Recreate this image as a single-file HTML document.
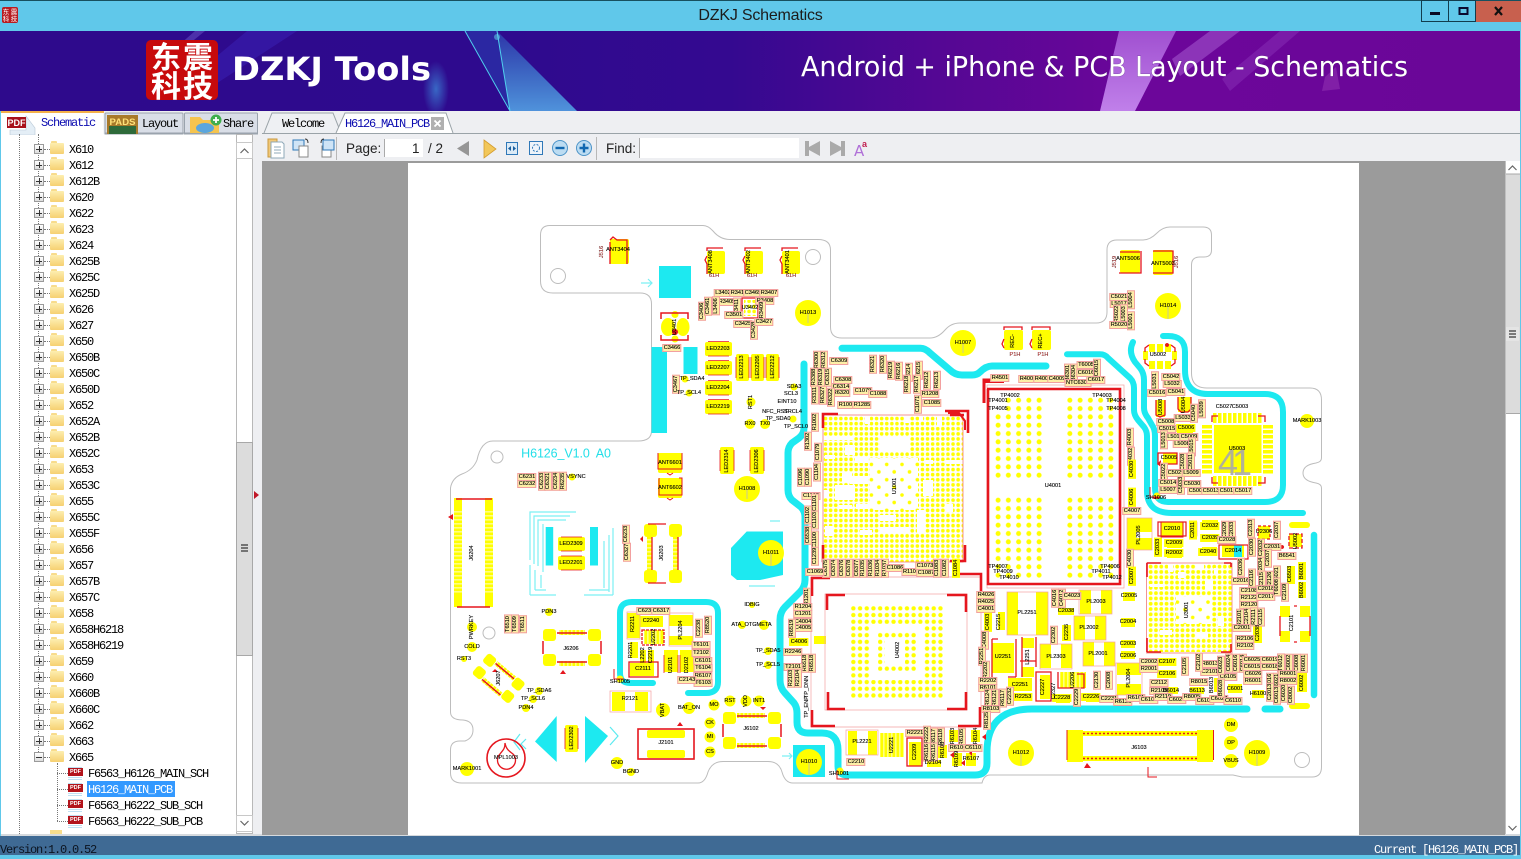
<!DOCTYPE html>
<html><head><meta charset="utf-8"><title>DZKJ Schematics</title>
<style>
html,body{margin:0;padding:0;width:1521px;height:859px;overflow:hidden;background:#60c8ea}
body{position:relative;font-family:"Liberation Sans","Noto Sans CJK SC",sans-serif}
.a{position:absolute}
.m{font-family:"Liberation Mono","Noto Sans CJK SC",monospace;font-size:12px;letter-spacing:-1.2px;white-space:pre;color:#000}
.r{position:absolute;height:16px;left:0;width:236px}
.r i{position:absolute;left:34px;top:3px;width:8px;height:8px;border:1px solid #9a9a9a;background:linear-gradient(#fff,#ddd)}
.r i:before{content:"";position:absolute;left:1px;top:4px;width:6px;height:1px;background:#333}
.r i:after{content:"";position:absolute;left:4px;top:1px;width:1px;height:6px;background:#333}
.r i.o:after{display:none}
.r s{position:absolute;left:44px;top:8px;width:6px;border-top:1px dotted #777}
.r em{position:absolute;left:50px;top:2px;width:14px;height:11px;border-radius:1px;background:linear-gradient(#fdeeb0,#f6d071)}
.r em:before{content:"";position:absolute;left:1px;top:-2px;width:6px;height:2px;background:#f8dc8c;border-radius:1px 1px 0 0}
.r span{position:absolute;left:69px;top:2px;font-family:"Liberation Mono",monospace;font-size:12px;letter-spacing:-1.2px;line-height:14px;color:#000;white-space:pre}
.f span{left:88px}
.f u{position:absolute;left:68px;top:1px;width:14px;height:15px;background:repeating-linear-gradient(#fff 0 1px,#bfe0f2 1px 2px);text-decoration:none}
.f u:before{content:"PDF";position:absolute;left:0;top:2px;width:15px;height:8px;background:#b3141c;color:#fff;font:bold 5.5px/8px "Liberation Sans";text-align:center}
.f s{left:57px;width:11px}
#pcb b{position:absolute;transform:translate(-50%,-50%);font:normal 5.6px/6px "Liberation Sans";background:#fdeea6;border:.5px solid #f2a0a0;padding:0 .5px;color:#000;white-space:nowrap;-webkit-text-stroke:.12px #000}
#pcb b.v{transform:translate(-50%,-50%) rotate(-90deg)}
#pcb b.n{background:none;border:0}
#pcb b.y{background:#ff0;border-color:#ff0}
</style></head><body>

<!-- title bar -->
<div class="a" style="left:0;top:0;width:1521px;height:1px;background:#17505f"></div>
<div class="a" style="left:0;top:0;width:1521px;text-align:center;font-size:16px;line-height:31px;color:#1c1c1c;letter-spacing:-.2px">DZKJ Schematics</div>
<svg class="a" style="left:2px;top:7px" width="16" height="16"><rect width="16" height="16" rx="2" fill="#b81c20"/><text x="4" y="7" font-size="6.5" fill="#fff" text-anchor="middle" font-family="Noto Sans CJK SC">东</text><text x="12" y="7" font-size="6.5" fill="#fff" text-anchor="middle" font-family="Noto Sans CJK SC">震</text><text x="4" y="14" font-size="6.5" fill="#fff" text-anchor="middle" font-family="Noto Sans CJK SC">科</text><text x="12" y="14" font-size="6.5" fill="#fff" text-anchor="middle" font-family="Noto Sans CJK SC">技</text></svg>
<svg class="a" style="left:1421px;top:0" width="100" height="22">
<rect x=".5" y=".5" width="27" height="21" fill="#60c8ea" stroke="#123d4d"/>
<rect x="27.5" y=".5" width="27" height="21" fill="#60c8ea" stroke="#123d4d"/>
<rect x="55" y="1" width="45" height="21" fill="#c8604e"/>
<rect x="9" y="12" width="10" height="3" fill="#0a0a22"/>
<rect x="38.5" y="8" width="8" height="6" fill="none" stroke="#0a0a30" stroke-width="2"/>
<path d="M74 7l7 8M81 7l-7 8" stroke="#111" stroke-width="2.2"/>
</svg>

<!-- banner -->
<svg class="a" style="left:0;top:31px" width="1520" height="80">
<defs>
<linearGradient id="bg" x1="0" x2="1"><stop offset="0" stop-color="#2e0a8c"/><stop offset=".33" stop-color="#2e0a8e"/><stop offset=".48" stop-color="#340990"/><stop offset=".62" stop-color="#550794"/><stop offset=".75" stop-color="#6c069a"/><stop offset="1" stop-color="#6a0698"/></linearGradient>
<linearGradient id="bl" x1="0" x2="0" y1="0" y2="1"><stop offset="0" stop-color="#4ab4e8" stop-opacity=".1"/><stop offset="1" stop-color="#5cb6ee" stop-opacity=".75"/></linearGradient>
<linearGradient id="pk" x1="0" x2="0" y1="0" y2="1"><stop offset="0" stop-color="#a050d0"/><stop offset="1" stop-color="#c080ea"/></linearGradient>
<radialGradient id="gl"><stop offset="0" stop-color="#3c86d8" stop-opacity=".75"/><stop offset="1" stop-color="#3c86d8" stop-opacity="0"/></radialGradient>
</defs>
<rect width="1520" height="80" fill="url(#bg)"/>
<path d="M297 0L247 0L175 60L205 60Z" fill="#3a20b4" opacity=".55"/>
<path d="M205 0L195 0L170 22L178 22Z" fill="#6a55c8" opacity=".5"/>
<ellipse cx="436" cy="58" rx="13" ry="28" fill="url(#gl)"/>
<path d="M465 0L497 0L577 80L510 80Z" fill="#2b2ea8" opacity=".8"/>
<path d="M497 0L577 80L510 80Z" fill="url(#bl)"/>
<path d="M465 0L510 80M497 0L510 80" stroke="#4fd0ee" stroke-width="1" fill="none"/>
<circle cx="497" cy="6" r="3" fill="#66e2f0" opacity=".5"/>
<path d="M1119 0L1176 0L1135 80L1100 80Z" fill="url(#pk)"/>
<path d="M1210 0L1240 0L1180 45L1172 28Z" fill="#9a48c4" opacity=".7"/>
<path d="M1280 0L1300 0L1230 60L1222 48Z" fill="#8a30b8" opacity=".5"/>
<path d="M1325 46L1336 36L1340 58L1322 60Z" fill="#9030b0" opacity=".6"/>
<rect x="146" y="9" width="72" height="60" rx="5" fill="#c70a0c"/>
<g fill="#fff" font-family="Noto Sans CJK SC" font-weight="700" font-size="30" text-anchor="middle"><text x="166" y="37">东</text><text x="198" y="37">震</text><text x="166" y="66">科</text><text x="198" y="66">技</text></g>
<text x="232" y="49" font-family="DejaVu Sans" font-weight="700" font-size="32" fill="#fff" textLength="199" lengthAdjust="spacingAndGlyphs">DZKJ Tools</text>
<text x="801" y="45" font-family="DejaVu Sans" font-size="28" fill="#fff" textLength="607" lengthAdjust="spacingAndGlyphs" style="paint-order:stroke" stroke="#3a1c60" stroke-opacity=".35" stroke-width="1">Android + iPhone &amp; PCB Layout - Schematics</text>
</svg>
<div class="a" style="left:1520px;top:31px;width:1px;height:828px;background:#60c8ea"></div>

<!-- tab bars -->
<div class="a" style="left:1px;top:111px;width:1519px;height:50px;background:#eeeff2"></div>
<div class="a" style="left:262px;top:133px;width:1258px;height:1px;background:#9aa3a8"></div>
<div class="a" style="left:1px;top:134px;width:261px;height:702px;background:#eeeff2"></div>
<div class="a" style="left:1px;top:134px;width:252px;height:700px;background:#fff"></div>

<svg class="a" style="left:0;top:111px" width="460" height="24">
<path d="M105 23V3q0-1 1-1h76q1 0 1 1V23Z" fill="#d9dee7" stroke="#9aa3ad"/>
<path d="M184.500 23V3q0-1 1-1h71q1 0 1 1V23Z" fill="#d9dee7" stroke="#9aa3ad"/>
<path d="M105 22H258" stroke="#9aa3ad"/>
<path d="M1 24V2H103.500V24Z" fill="#fff"/>
<rect x="1" y="0" width="103" height="2" fill="#f3b04a"/>
<path d="M26 5L35 17V24H10V19H26Z" fill="#e4eef6" stroke="#b8c8d6" stroke-width=".6"/>
<rect x="7" y="6" width="19" height="11" fill="#a8101a"/><text x="16.500" y="15" font-size="9" font-weight="700" fill="#fff" text-anchor="middle">PDF</text>
<rect x="107" y="4" width="31" height="19" fill="#a87a2a"/><rect x="109" y="15" width="27" height="8" fill="#2e6a3a"/><text x="122.500" y="14" font-size="9.500" font-weight="700" fill="#ffe27a" text-anchor="middle" textLength="26">PADS</text>
<path d="M190 22V6h10l3 3h16v13Z" fill="#f5c44e"/><ellipse cx="205" cy="17" rx="9" ry="5" fill="#5aa6de"/><circle cx="216" cy="9" r="5.500" fill="#3fae4c"/><path d="M213 9h6M216 6v6" stroke="#fff" stroke-width="1.800"/>
<path d="M264 22L272 2H333L341 22" fill="#eef0f3" stroke="#9aa3a8"/>
<path d="M336 22L345 2H446L453 22" fill="#fff" stroke="#9aa3a8"/>
<rect x="431" y="6" width="13" height="13" fill="#b0b0b0"/><path d="M434.500 9.500l6 6M440.500 9.500l-6 6" stroke="#fff" stroke-width="1.800"/>
</svg>
<div class="a m" style="left:41px;top:116px;color:#0b0bb0">Schematic</div>
<div class="a m" style="left:142px;top:117px">Layout</div>
<div class="a m" style="left:223px;top:117px">Share</div>
<div class="a m" style="left:282px;top:117px">Welcome</div>
<div class="a m" style="left:345px;top:117px;color:#0b0bb0">H6126_MAIN_PCB</div>

<!-- tree -->
<div class="a" style="left:19px;top:134px;height:700px;border-left:1px dotted #777"></div>
<div class="a" style="left:38px;top:134px;height:622px;border-left:1px dotted #777"></div>
<div class="a" style="left:57px;top:763px;height:58px;border-left:1px dotted #777"></div>
<div class="r" style="top:141px"><i></i><s></s><em></em><span>X610</span></div>
<div class="r" style="top:157px"><i></i><s></s><em></em><span>X612</span></div>
<div class="r" style="top:173px"><i></i><s></s><em></em><span>X612B</span></div>
<div class="r" style="top:189px"><i></i><s></s><em></em><span>X620</span></div>
<div class="r" style="top:205px"><i></i><s></s><em></em><span>X622</span></div>
<div class="r" style="top:221px"><i></i><s></s><em></em><span>X623</span></div>
<div class="r" style="top:237px"><i></i><s></s><em></em><span>X624</span></div>
<div class="r" style="top:253px"><i></i><s></s><em></em><span>X625B</span></div>
<div class="r" style="top:269px"><i></i><s></s><em></em><span>X625C</span></div>
<div class="r" style="top:285px"><i></i><s></s><em></em><span>X625D</span></div>
<div class="r" style="top:301px"><i></i><s></s><em></em><span>X626</span></div>
<div class="r" style="top:317px"><i></i><s></s><em></em><span>X627</span></div>
<div class="r" style="top:333px"><i></i><s></s><em></em><span>X650</span></div>
<div class="r" style="top:349px"><i></i><s></s><em></em><span>X650B</span></div>
<div class="r" style="top:365px"><i></i><s></s><em></em><span>X650C</span></div>
<div class="r" style="top:381px"><i></i><s></s><em></em><span>X650D</span></div>
<div class="r" style="top:397px"><i></i><s></s><em></em><span>X652</span></div>
<div class="r" style="top:413px"><i></i><s></s><em></em><span>X652A</span></div>
<div class="r" style="top:429px"><i></i><s></s><em></em><span>X652B</span></div>
<div class="r" style="top:445px"><i></i><s></s><em></em><span>X652C</span></div>
<div class="r" style="top:461px"><i></i><s></s><em></em><span>X653</span></div>
<div class="r" style="top:477px"><i></i><s></s><em></em><span>X653C</span></div>
<div class="r" style="top:493px"><i></i><s></s><em></em><span>X655</span></div>
<div class="r" style="top:509px"><i></i><s></s><em></em><span>X655C</span></div>
<div class="r" style="top:525px"><i></i><s></s><em></em><span>X655F</span></div>
<div class="r" style="top:541px"><i></i><s></s><em></em><span>X656</span></div>
<div class="r" style="top:557px"><i></i><s></s><em></em><span>X657</span></div>
<div class="r" style="top:573px"><i></i><s></s><em></em><span>X657B</span></div>
<div class="r" style="top:589px"><i></i><s></s><em></em><span>X657C</span></div>
<div class="r" style="top:605px"><i></i><s></s><em></em><span>X658</span></div>
<div class="r" style="top:621px"><i></i><s></s><em></em><span>X658H6218</span></div>
<div class="r" style="top:637px"><i></i><s></s><em></em><span>X658H6219</span></div>
<div class="r" style="top:653px"><i></i><s></s><em></em><span>X659</span></div>
<div class="r" style="top:669px"><i></i><s></s><em></em><span>X660</span></div>
<div class="r" style="top:685px"><i></i><s></s><em></em><span>X660B</span></div>
<div class="r" style="top:701px"><i></i><s></s><em></em><span>X660C</span></div>
<div class="r" style="top:717px"><i></i><s></s><em></em><span>X662</span></div>
<div class="r" style="top:733px"><i></i><s></s><em></em><span>X663</span></div>
<div class="r" style="top:749px"><i class="o"></i><s></s><em></em><span>X665</span></div>
<div class="r f" style="top:765px"><s></s><u></u><span>F6563_H6126_MAIN_SCH</span></div>
<div class="a" style="left:87px;top:781px;width:88px;height:16px;background:#3399ff"></div>
<div class="r f" style="top:781px"><s></s><u></u><span style="color:#fff">H6126_MAIN_PCB</span></div>
<div class="r f" style="top:797px"><s></s><u></u><span>F6563_H6222_SUB_SCH</span></div>
<div class="r f" style="top:813px"><s></s><u></u><span>F6563_H6222_SUB_PCB</span></div>
<div class="a" style="left:50px;top:830px;width:12px;height:4px;background:#f8dd8c"></div>

<!-- tree scrollbar -->
<svg class="a" style="left:236px;top:134px" width="26" height="700">
<rect x=".5" y=".5" width="16" height="699" fill="#fff" stroke="#b8b8b8"/>
<rect x=".5" y="8.500" width="16" height="16" fill="#fff" stroke="#c8c8c8"/>
<path d="M4.500 19l4-4 4 4" fill="none" stroke="#666" stroke-width="1.200"/>
<rect x=".5" y="681.500" width="16" height="16" fill="#fff" stroke="#c8c8c8"/>
<path d="M4.500 687l4 4 4-4" fill="none" stroke="#666" stroke-width="1.200"/>
<rect x=".5" y="308.500" width="16" height="213" fill="#dcdcdc" stroke="#a8a8a8"/>
<path d="M5 411h7M5 414h7M5 417h7" stroke="#666" stroke-width="1.800"/>
<path d="M18 357l5 4-5 4Z" fill="#c01828"/>
</svg>

<!-- toolbar -->
<svg class="a" style="left:262px;top:134px" width="620" height="28">
<path d="M6 5h9v18H6z" fill="#f1c878" stroke="#c99a40"/><path d="M9 8h11l2 2v14H9z" fill="#fff" stroke="#8fa8b8"/><path d="M12 13h7M12 16h7M12 19h7" stroke="#8fa8b8"/>
<path d="M31 6h11v10H31z" fill="#cfe4f6" stroke="#2f78b8"/><path d="M37 12h9v11H37z" fill="#fff" stroke="#888"/><path d="M43 5q3 0 3 4" fill="none" stroke="#333"/>
<path d="M60 12h9v11H60z" fill="#fff" stroke="#888"/><path d="M61 6h11v10H61z" fill="#cfe4f6" stroke="#2f78b8"/><path d="M59 9q0-4 3-4" fill="none" stroke="#333"/>
<path d="M74.500 3v23" stroke="#b8b8b8"/>
<rect x="122" y="5" width="39" height="18" fill="#fff"/>
<path d="M122.500 5v18" stroke="#aaa"/>
<path d="M207 7v15l-12-7.500z" fill="#969696"/>
<path d="M222 6l12 9-12 9z" fill="#f2c75a" stroke="#d49c2e" stroke-width=".8"/>
<rect x="244.500" y="8.500" width="11" height="12" fill="#dbeaf6" stroke="#2f78b8"/><path d="M246 14.500l3-2.500v5zM254 14.500l-3-2.500v5z" fill="#1b5f9e"/>
<rect x="267.500" y="7.500" width="13" height="13" fill="#eef4fa" stroke="#2f78b8"/><circle cx="274" cy="14" r="3.500" fill="none" stroke="#2f78b8" stroke-dasharray="2 1.400"/>
<circle cx="298" cy="14" r="7.500" fill="#bcdcf2" stroke="#4d94c8"/><rect x="293.500" y="12.800" width="9" height="2.400" fill="#1168b0"/>
<circle cx="322" cy="14" r="7.500" fill="#bcdcf2" stroke="#4d94c8"/><path d="M317.500 14h9M322 9.500v9" stroke="#1168b0" stroke-width="2.400"/>
<path d="M334.500 3v23" stroke="#b8b8b8"/>
<rect x="377" y="4" width="160" height="20" fill="#fff"/><path d="M377.500 4v20" stroke="#aaa"/>
<path d="M543 7h4v15h-4zM558 7v15l-11-6v-3z" fill="#aaa"/>
<path d="M568 7v15l11-6v-3zM579 7h4v15h-4z" fill="#aaa"/>
<text x="592" y="22" font-size="15" fill="#b070d8" font-family="DejaVu Sans">A</text><text x="600" y="13" font-size="9" font-weight="700" fill="#c02050">a</text>
</svg>
<div class="a" style="left:346px;top:140px;font-size:13.500px;line-height:17px;color:#222">Page:</div>
<div class="a" style="left:412px;top:140px;font-size:13.500px;line-height:17px;color:#222">1</div>
<div class="a" style="left:428px;top:140px;font-size:13.500px;line-height:17px;color:#222">/ 2</div>
<div class="a" style="left:606px;top:140px;font-size:13.500px;line-height:17px;color:#222">Find:</div>

<!-- right scrollbar -->
<svg class="a" style="left:1505px;top:161px" width="15" height="675">
<rect width="15" height="675" fill="#fff"/>
<rect y="13" width="15" height="240" fill="#dcdcdc"/><path d="M0 13h15M0 252.500h15" stroke="#a8a8a8"/>
<rect x="1" y="166" width="13" height="14" fill="#e4e4e4"/>
<path d="M4 170h7M4 173h7M4 176h7" stroke="#555" stroke-width="1.500"/>
<path d="M3.500 9l4-4 4 4" fill="none" stroke="#666" stroke-width="1.200"/>
<path d="M3.500 665l4 4 4-4" fill="none" stroke="#666" stroke-width="1.200"/>
<path d="M.5 0v675" stroke="#c0c0c0"/>
</svg>

<!-- status -->
<div class="a" style="left:1px;top:834px;width:1519px;height:2px;background:#d6dade"></div>
<div class="a" style="left:0;top:836px;width:1520px;height:19px;background:#3f6a94"></div>
<div class="a m" style="left:0;top:843px;color:#0c1420">Version:1.0.0.52</div>
<div class="a m" style="right:3px;top:843px;color:#fff">Current [H6126_MAIN_PCB]</div>

<!-- PCB -->
<svg class="a" style="left:0;top:0" width="1521" height="859" viewBox="0 0 1521 859" id="board">
<defs>
<pattern id="p5" width="5.1" height="5.1" x="823" y="416" patternUnits="userSpaceOnUse"><circle cx="2.550" cy="2.550" r="1.800" fill="#ff0"/></pattern>
<pattern id="p3" width="5.3" height="5.3" x="1148" y="564" patternUnits="userSpaceOnUse"><circle cx="2.650" cy="2.650" r="1.900" fill="#ff0"/></pattern>
<pattern id="p10" width="10.25" height="8.33" x="993" y="396" patternUnits="userSpaceOnUse"><circle cx="5.100" cy="4.200" r="2.500" fill="#ff0"/></pattern>
<pattern id="p7" width="6.7" height="6.7" x="850" y="605" patternUnits="userSpaceOnUse"><circle cx="3.350" cy="3.350" r="2.200" fill="#ff0"/></pattern>
<pattern id="sp" width="15.3" height="15.3" x="823" y="416" patternUnits="userSpaceOnUse"><circle cx="2.500" cy="2.500" r="1.800" fill="#ff0"/><circle cx="10" cy="10" r="1.800" fill="#ff0"/></pattern>
<pattern id="st" width="5" height="10" x="1213" y="413" patternUnits="userSpaceOnUse"><rect width="3.500" height="10" fill="#ff0"/></pattern>
<pattern id="sh" width="10" height="5" x="1202" y="425" patternUnits="userSpaceOnUse"><rect width="10" height="3.500" fill="#ff0"/></pattern>
<pattern id="pv" width="4" height="4" x="0" y="0" patternUnits="userSpaceOnUse"><rect y=".3" width="4" height="3.200" fill="#ff0"/></pattern>
<pattern id="ph" width="4" height="4" x="0" y="0" patternUnits="userSpaceOnUse"><rect x=".3" width="3.200" height="4" fill="#ff0"/></pattern>
</defs>
<rect x="262" y="161" width="1243" height="674" fill="#9b9b9b"/>
<rect x="408" y="163" width="951" height="672" fill="#fff"/>

<!-- outline -->
<path d="M550 225.500H703Q708 225.500 713 231Q720 239.500 730 239.500H818Q830.500 239.500 830.500 250V327Q830.500 338 842 338H930Q938 338 945 330Q951 323 960 323H1096Q1107 323 1107 312V250Q1107 240 1117 240H1143Q1150 240 1157 233Q1163 227 1170 227H1203Q1211.500 227 1211.500 235V250Q1211.500 257 1204 257H1200Q1191.500 257 1191.500 265V373Q1191.500 388 1207 388H1310Q1321.500 388 1321.500 400V458Q1321.500 462 1316 463Q1303 465 1303 473Q1303 481 1316 483Q1321.500 484 1321.500 488V767Q1321.500 777 1312 777H1242L1233 775H990Q984 775 982 783H793Q785 783 782 772Q779 761.500 768 761.500H723Q712 761.500 708 772Q705 783 698 783H462Q450.500 783 450.500 773V750Q450.500 741 460 741H465Q473 738 473 730Q473 721 463 720Q450.500 720 450.500 712V488Q452 478 462 474Q473 470 477 460Q481 441 493 441H638Q651.500 441 651.500 431V304Q651.500 293 640 293H553Q540.500 293 540.500 281V235Q540.500 225.500 550 225.500Z" fill="none" stroke="#bdbdbd" stroke-width="1"/>
<g fill="#fff" stroke="#bdbdbd"><circle cx="558" cy="276" r="7.500"/><circle cx="813" cy="257" r="7.500"/><circle cx="497" cy="457" r="6"/><circle cx="489" cy="633" r="6"/><circle cx="1302" cy="760" r="7.500"/></g>

<!-- cyan -->
<g fill="#1de9f0">
<rect x="659" y="266" width="32" height="32"/>
<rect x="651.500" y="347" width="15.500" height="86"/>
<rect x="683.500" y="347" width="14" height="27"/>
<path d="M746.700 531.500H783V575L760 580H737L731 575V548Z"/>
<rect x="793" y="745" width="32" height="32"/>
<path d="M556.700 716L535 741.500L556.700 762Z"/>
<path d="M585 716L608 736L585 763Z"/>
<rect x="545.700" y="527" width="7.500" height="38.500"/>
<rect x="590" y="527" width="8" height="38.500"/>
</g>
<g fill="none" stroke="#1de9f0" stroke-width="7" stroke-linecap="round" stroke-linejoin="round">
<path d="M842 348.300H920Q925 348 930 353L950 370Q955 375 962 375H972Q977 375 980 372Q986 366 992 366H1046"/>
<path d="M1067 354.300H1100Q1105 354.300 1108 358L1130 378Q1134 382 1134 388V410Q1134 415 1138 420L1144 427Q1147 431 1147 436V491Q1147 513 1172 513H1303" stroke-width="6"/>
<path d="M1133 342Q1128 352 1135 362L1140 368Q1144 373 1144 380V408Q1144 413 1148 418L1152 425Q1155 429 1155 436V488Q1155 502 1168 502H1265Q1283 502 1283 485V412Q1283 394 1265 394H1208Q1185 394 1185 370V352Q1185 336 1168 336H1163" stroke-width="6"/>
<path d="M804 364V428Q804 434 799 438L792 443Q788 447 788 453V490Q788 496 792 500L801 507Q805 511 805 517V580Q805 587 800 592L785 607Q780 612 780 620V680Q780 688 785 693L794 703Q797 707 797 713V722Q797 733 808 733H822Q838 733 838 750V766Q838 775 848 775H975Q987 775 987 763V752Q987 709 1032 709H1247"/>
<path d="M1265 709H1280"/>
<path d="M1314 535V695" stroke-width="6.500"/>
<path d="M653 683H630Q620 683 620 673V613Q620 602 632 602H706Q718 602 718 613V682Q718 693 706 693H688" stroke-width="6"/>
</g>
<g fill="none" stroke="#7cf0f4" stroke-width="1.200">
<path d="M530 560V512H576M534 564V516H570M538 566V520H566M543 572V524"/>
<path d="M530 595H556M535 590H546M530 565V595M535 570V590M541 575V588"/>
<path d="M613 595V528M609 592V535M604 588V541M584 595H613M589 590H609"/>
<path d="M641 283H652M648 279L652 283L648 287"/>
<path d="M526 739l-5 5 5 5M520 734l-6 8 6 8" stroke="#5ceaf0"/>
<path d="M610 727l8 9-8 9" stroke="#5ceaf0"/>
<path d="M782 756H792M789 753L792 756L789 759"/>
<path d="M749 586H775M770 521H780"/>
</g>

<!-- BGA dots -->
<rect x="823" y="416" width="140" height="146" fill="url(#p5)"/>
<g fill="#fff">
<rect x="865" y="415" width="5" height="9"/><rect x="937" y="415" width="5" height="12"/><rect x="905" y="415" width="4" height="8"/><rect x="919" y="415" width="4" height="6"/>
<rect x="823" y="436" width="30" height="4"/><rect x="845" y="445" width="10" height="10"/><rect x="880" y="437" width="30" height="15"/><rect x="855" y="457" width="13" height="6"/><rect x="825" y="455" width="10" height="4"/>
<rect x="842" y="472" width="10" height="10"/><rect x="835" y="485" width="20" height="15"/><rect x="823" y="490" width="6" height="8"/><rect x="850" y="476" width="18" height="8"/><rect x="856" y="504" width="14" height="5"/>
<rect x="870" y="458" width="48" height="52"/><rect x="917" y="510" width="8" height="23"/><rect x="880" y="527" width="30" height="6"/>
<rect x="923" y="480" width="10" height="16"/><rect x="925" y="460" width="8" height="4"/><rect x="946" y="460" width="18" height="4"/><rect x="825" y="526" width="8" height="10"/><rect x="860" y="530" width="12" height="5"/><rect x="945" y="504" width="8" height="8"/><rect x="880" y="515" width="16" height="6"/><rect x="838" y="505" width="14" height="4"/>
</g>
<rect x="870" y="458" width="48" height="52" fill="url(#sp)"/>
<rect x="823" y="415" width="140" height="147" fill="none" stroke="#f07a7a" stroke-width=".8"/>
<g fill="url(#p10)"><rect x="1003" y="396" width="41" height="17"/><rect x="993" y="413" width="51" height="67"/><rect x="1065" y="396" width="51" height="84"/><rect x="993" y="496" width="51" height="84"/><rect x="1065" y="496" width="51" height="84"/></g>
<rect x="850" y="605" width="94" height="94" fill="url(#p7)"/>
<rect x="871" y="624" width="52" height="56" fill="#fff"/>
<rect x="878" y="632" width="38" height="40" fill="url(#p7)"/>
<rect x="885" y="638" width="20" height="27" fill="#fff"/>
<rect x="1148" y="564" width="84" height="88" fill="url(#p3)"/>
<g fill="#fff"><rect x="1176" y="596" width="36" height="28"/><rect x="1168" y="564" width="5" height="8"/><rect x="1196" y="564" width="8" height="6"/><rect x="1214" y="568" width="4" height="7"/><rect x="1150" y="584" width="14" height="3"/><rect x="1205" y="580" width="8" height="10"/><rect x="1160" y="630" width="12" height="5"/><rect x="1196" y="632" width="12" height="6"/><rect x="1218" y="616" width="6" height="10"/><rect x="1178" y="572" width="7" height="6"/></g>
<rect x="1176" y="596" width="36" height="28" fill="url(#sp)"/>
<rect x="1146.500" y="563" width="85.500" height="90" fill="none" stroke="#f07a7a" stroke-width=".8"/>

<!-- yellow comps -->
<g fill="#ff0">
<circle cx="808" cy="313" r="13"/><circle cx="747" cy="489" r="13"/><circle cx="963" cy="343" r="13"/><circle cx="1168" cy="306" r="13"/><circle cx="771" cy="553" r="13"/><circle cx="809" cy="762" r="13"/><circle cx="1021" cy="753" r="13"/><circle cx="1257" cy="753" r="13"/>
<circle cx="1307" cy="421" r="7"/><circle cx="1231" cy="725" r="7"/><circle cx="1231" cy="743" r="7"/><circle cx="1231" cy="761" r="7"/><circle cx="467" cy="769" r="7"/><circle cx="472" cy="627" r="5"/><circle cx="472" cy="647" r="5"/>
<circle cx="714" cy="705" r="5.500"/><circle cx="730" cy="701" r="5.500"/><circle cx="746" cy="701" r="5.500"/><circle cx="759" cy="701" r="5.500"/><circle cx="710" cy="723" r="5.500"/><circle cx="710" cy="737" r="5.500"/><circle cx="710" cy="752" r="5.500"/><circle cx="617" cy="763" r="6"/><circle cx="631" cy="772" r="4"/><circle cx="663" cy="710" r="7"/><circle cx="689" cy="708" r="6"/><circle cx="742" cy="625" r="4"/><circle cx="764" cy="625" r="5"/><circle cx="752" cy="605" r="3"/><circle cx="768" cy="651" r="4"/><circle cx="768" cy="665" r="4"/><circle cx="549" cy="612" r="4"/><circle cx="539" cy="691" r="4"/><circle cx="533" cy="699" r="4"/><circle cx="526" cy="708" r="4"/><circle cx="464" cy="659" r="3"/><circle cx="685" cy="379" r="3.500"/><circle cx="689" cy="393" r="3.500"/><circle cx="794" cy="387" r="3.500"/><circle cx="750" cy="424" r="5"/><circle cx="765" cy="424" r="5"/><circle cx="751" cy="402" r="4.500"/><circle cx="793" cy="419" r="3.500"/><circle cx="572" cy="477" r="3.500"/><circle cx="620" cy="679" r="3.500"/><circle cx="840" cy="771" r="3.500"/><circle cx="1157" cy="496" r="3.500"/>
<rect x="610" y="239" width="19" height="25" rx="2"/>
<rect x="707" y="251" width="18" height="23" rx="2"/><rect x="745" y="251" width="18" height="23" rx="2"/><rect x="782" y="251" width="18" height="23" rx="2"/>
<rect x="1120" y="250" width="20" height="23" rx="2"/><rect x="1153" y="250" width="20" height="25" rx="2"/>
<rect x="1004" y="330" width="19" height="20" rx="2"/><rect x="1032" y="330" width="19" height="20" rx="2"/>
<rect x="705" y="342" width="27" height="14" rx="2"/><rect x="705" y="361" width="27" height="14" rx="2"/><rect x="705" y="381" width="27" height="14" rx="2"/><rect x="705" y="400" width="27" height="14" rx="2"/>
<rect x="736" y="354" width="13" height="27" rx="2"/><rect x="751" y="354" width="13" height="27" rx="2"/><rect x="766" y="354" width="13" height="27" rx="2"/>
<rect x="720" y="447" width="14" height="27" rx="2"/><rect x="750" y="447" width="14" height="27" rx="2"/>
<rect x="658" y="453" width="24" height="20" rx="2"/><rect x="658" y="478" width="24" height="20" rx="2"/>
<rect x="558" y="537" width="27" height="14" rx="2"/><rect x="558" y="556" width="27" height="14" rx="2"/>
<rect x="565" y="725" width="13" height="27" rx="2"/>
<ellipse cx="668" cy="327" rx="7" ry="9"/><ellipse cx="683" cy="327" rx="6.500" ry="9"/><circle cx="675" cy="314.500" r="3.500"/><circle cx="675" cy="339" r="3.500"/>
<!-- J6204 -->
<rect x="454" y="502" width="8" height="105" fill="url(#pv)"/><rect x="485" y="502" width="8" height="105" fill="url(#pv)"/>
<rect x="454" y="498" width="8" height="11"/><rect x="485" y="498" width="8" height="11"/><rect x="454" y="595" width="8" height="10"/><rect x="485" y="595" width="8" height="10"/>
<!-- J6203 -->
<rect x="644" y="524" width="13" height="13" rx="3"/><rect x="669" y="524" width="13" height="13" rx="3"/><rect x="644" y="570" width="13" height="13" rx="3"/><rect x="669" y="570" width="13" height="13" rx="3"/>
<rect x="647" y="537" width="5" height="33" fill="url(#pv)"/><rect x="673" y="537" width="5" height="33" fill="url(#pv)"/>
<!-- J6206 -->
<rect x="543" y="629" width="13" height="12" rx="3"/><rect x="588" y="629" width="13" height="12" rx="3"/><rect x="543" y="654" width="13" height="12" rx="3"/><rect x="588" y="654" width="13" height="12" rx="3"/>
<rect x="559" y="630" width="26" height="5" fill="url(#ph)"/><rect x="559" y="661" width="26" height="5" fill="url(#ph)"/>
<!-- J6102 -->
<rect x="723" y="712" width="13" height="12" rx="3"/><rect x="768" y="712" width="13" height="12" rx="3"/><rect x="723" y="737" width="13" height="12" rx="3"/><rect x="768" y="737" width="13" height="12" rx="3"/>
<rect x="737" y="713" width="28" height="5" fill="url(#ph)"/><rect x="737" y="743" width="28" height="5" fill="url(#ph)"/>
<!-- J2101 -->
<rect x="647" y="730" width="38" height="8" rx="2"/><rect x="647" y="750" width="38" height="8" rx="2"/>
<!-- J6207 -->
<g transform="rotate(40 499 678)"><rect x="475" y="665" width="11" height="11" rx="3"/><rect x="512" y="665" width="11" height="11" rx="3"/><rect x="475" y="681" width="11" height="11" rx="3"/><rect x="512" y="681" width="11" height="11" rx="3"/><rect x="487" y="666" width="24" height="5" fill="url(#ph)"/><rect x="487" y="687" width="24" height="5" fill="url(#ph)"/></g>
<!-- R2121 -->
<rect x="612" y="692" width="13" height="19"/><rect x="635" y="692" width="13" height="19"/>
<!-- loop -->
<rect x="627" y="613" width="13" height="25"/><rect x="639" y="616" width="24" height="11"/><rect x="644" y="630" width="20" height="14" fill="url(#ph)"/>
<rect x="669" y="615" width="24" height="11"/><rect x="669" y="636" width="24" height="9"/>
<rect x="664" y="650" width="14" height="22"/><rect x="680" y="650" width="14" height="22"/>
<rect x="630" y="642" width="8" height="16"/><rect x="640" y="650" width="6" height="16"/><rect x="648" y="650" width="6" height="16"/><rect x="630" y="663" width="24" height="13"/>
<!-- PL etc -->
<rect x="1007" y="592" width="11" height="43"/><rect x="1036" y="592" width="12" height="43"/>
<rect x="1080" y="590" width="11" height="24"/><rect x="1101" y="590" width="11" height="24"/>
<rect x="1074" y="616" width="11" height="24"/><rect x="1095" y="616" width="11" height="24"/>
<rect x="1083" y="642" width="11" height="24"/><rect x="1104" y="642" width="11" height="24"/>
<rect x="1040" y="644" width="11" height="24"/><rect x="1061" y="644" width="11" height="24"/>
<rect x="1128" y="518" width="24" height="14"/><rect x="1128" y="538" width="24" height="12"/><rect x="1127" y="518" width="9" height="32"/>
<rect x="1117" y="663" width="24" height="12"/><rect x="1117" y="684" width="24" height="11"/>
<rect x="848" y="731" width="9" height="24"/><rect x="868" y="731" width="9" height="24"/>
<rect x="880" y="733" width="24" height="24" fill="url(#ph)"/>
<rect x="909" y="742" width="12" height="24"/>
<rect x="992" y="643" width="22" height="30"/><rect x="1022" y="638" width="12" height="10"/><rect x="1022" y="667" width="12" height="10"/>
<rect x="1040" y="675" width="10" height="24"/>
<rect x="1008" y="678" width="24" height="13"/><rect x="1056" y="694" width="14" height="9"/><rect x="1086" y="693" width="14" height="9"/>
<rect x="1060" y="672" width="26" height="16" fill="url(#ph)"/>
<rect x="1161" y="522" width="22" height="15"/><rect x="1167" y="540" width="15" height="8"/><rect x="1167" y="550" width="15" height="8"/><rect x="1202" y="547" width="15" height="9"/><rect x="1222" y="545" width="22" height="12"/>
<rect x="1202" y="520" width="16" height="10"/><rect x="1202" y="534" width="16" height="8"/><rect x="1190" y="522" width="7" height="14"/>
<rect x="1123" y="592" width="12" height="9"/><rect x="1121" y="618" width="14" height="9"/><rect x="1121" y="640" width="14" height="8"/><rect x="1121" y="651" width="14" height="8"/>
<rect x="1128" y="567" width="8" height="17"/>
<rect x="1128" y="462" width="8" height="14"/><rect x="1128" y="488" width="8" height="18"/><rect x="1058" y="608" width="16" height="7"/><rect x="1062" y="625" width="9" height="16"/><rect x="998" y="612" width="7" height="18"/>
<rect x="1164" y="687" width="14" height="7"/><rect x="1190" y="687" width="14" height="7"/><rect x="1160" y="671" width="16" height="6"/><rect x="1214" y="678" width="5" height="14"/><rect x="1228" y="684" width="14" height="9"/><rect x="1252" y="690" width="12" height="8"/><rect x="1297" y="672" width="10" height="20"/>
<rect x="1287" y="566" width="8" height="18"/><rect x="1298" y="562" width="8" height="18"/><rect x="1298" y="582" width="8" height="16"/>
<rect x="1253" y="625" width="9" height="18"/>
<rect x="1289" y="522" width="21" height="6" rx="3"/><rect x="1289" y="703" width="21" height="6" rx="3"/>
<rect x="1280" y="606" width="10" height="11"/><rect x="1300" y="606" width="10" height="11"/><rect x="1280" y="631" width="10" height="11"/><rect x="1300" y="631" width="10" height="11"/>
<rect x="1289" y="534" width="13" height="13"/><rect x="1258" y="526" width="12" height="13"/>
<rect x="814" y="636" width="12" height="8"/>
<rect x="1067" y="730" width="16" height="32"/><rect x="1197" y="730" width="16" height="32"/>
<rect x="1083" y="731" width="114" height="5"/><rect x="1083" y="756" width="114" height="5"/>
<rect x="949" y="730" width="9" height="12"/><rect x="971" y="730" width="9" height="12"/><rect x="938" y="745" width="9" height="13"/><rect x="952" y="753" width="10" height="13"/><rect x="966" y="753" width="10" height="13"/><rect x="927" y="760" width="14" height="7"/>
<!-- U5003 -->
<rect x="1214" y="425" width="47.500" height="48"/>
<rect x="1213" y="413" width="50" height="10" fill="url(#st)"/><rect x="1213" y="476" width="50" height="10" fill="url(#st)"/>
<rect x="1202" y="425" width="10" height="50" fill="url(#sh)"/><rect x="1263" y="425" width="10" height="50" fill="url(#sh)"/>
<!-- U5002 -->
<rect x="1149" y="344" width="6" height="8"/><rect x="1157" y="344" width="6" height="8"/><rect x="1165" y="344" width="6" height="8"/><rect x="1149" y="361" width="6" height="8"/><rect x="1157" y="361" width="6" height="8"/><rect x="1165" y="361" width="6" height="8"/><rect x="1143" y="351" width="5" height="9"/><rect x="1172" y="351" width="5" height="9"/>
<rect x="1156" y="400" width="9" height="17"/><rect x="1178" y="397" width="13" height="15"/>
<rect x="1177" y="424" width="16" height="9"/><rect x="1163" y="453" width="14" height="11"/>
<!-- U3402 -->
<rect x="744" y="300" width="12" height="16" fill="url(#p5)"/>
</g>
<rect x="1234" y="545" width="8" height="12" fill="#1de9f0"/>
<path d="M1083 733.500H1197M1083 758.500H1197" stroke="#e5161e" stroke-width="1.500" stroke-dasharray="2 2" fill="none"/>
<path d="M1213.500 730V760M1067 730V760" stroke="#e5161e" fill="none"/>

<text x="1218" y="475" font-family="Liberation Sans" font-size="36" fill="#a9a9a9" fill-opacity=".9" textLength="34">41</text>
<path d="M808 313v10M747 489v10M963 343v10M1168 306v13M771 553v13M809 762v13M1021 753v13M1257 753v13" stroke="#bbb" stroke-width=".8"/>

<!-- salmon outlines -->
<g fill="none" stroke="#f4a0a0" stroke-width=".7">
<rect x="987" y="385" width="137" height="203"/>
<rect x="825" y="594" width="142" height="116"/>
<rect x="846" y="730" width="32" height="25"/><rect x="1127" y="518" width="25" height="32"/>
<rect x="1079" y="590" width="33" height="24"/><rect x="1074" y="616" width="32" height="24"/><rect x="1083" y="642" width="32" height="24"/><rect x="1040" y="644" width="32" height="25"/><rect x="1007" y="592" width="41" height="43"/><rect x="1116" y="663" width="26" height="32"/>
<rect x="669" y="613" width="24" height="33"/><rect x="627" y="612" width="13" height="27"/><rect x="610" y="691" width="41" height="21"/>
<rect x="1190" y="522" width="7" height="14"/>
<path d="M811 577V727H981M811 577H981V727"/>
</g>

<!-- red -->
<g fill="none" stroke="#e5161e" stroke-width="1.300">
<path d="M610 240l3-3 4 3h10v24M610 264v-22M1141 251v22h-22M1140 252h-20M1153 251h20v22h-20"/>
<path d="M707 251v-3h16M707 274v-10l-2-4 2-4M745 251v-3h16M745 274v-10l-2-4 2-4M782 251v-3h16M782 274v-10l-2-4 2-4"/>
<path d="M1004 330v-3h18v3M1004 348l-2-4 2-5M1032 330v-3h18v3M1032 348l-2-4 2-5"/>
<path d="M661 319v-6h27v6M661 335v5h27v-5" stroke-width="1.500"/>
<path d="M742 298h16v20h-16z"/>
<path d="M708 341.500h21M708 356h21M708 360.500h21M708 375h21M708 380.500h21M708 395h21M708 399.500h21M708 414h21" stroke-width=".8"/>
<path d="M736 357v21M749 357v21M751 357v21M764 357v21M766 357v21M779 357v21M720 450v21M734 450v21M750 450v21M764 450v21" stroke-width=".8"/>
<path d="M658 453v16h24v-16M659 478v17h23v-17l-3 0M667 473l3 2 3-2M667 498l3 2 3-2" stroke-width="1"/>
<path d="M561 537h21M561 551h21M561 556h21M561 570h21M565 728v21M578 728v21" stroke-width=".8"/>
<path d="M457 607h33M456 499h36" stroke-width="1.500"/>
<path d="M648 524h18M648 583h18M652 537v33M678 537v33"/>
<path d="M557 633h30M557 662h30M543 641v13M601 641v13M737 716h30M737 746h30M723 724v13M781 724v13" stroke-width="1.500"/>
<g transform="rotate(40 499 678)"><path d="M487 669h24M487 690h24" stroke-width="1.500"/></g>
<rect x="638" y="729" width="56" height="30" stroke-width="1.600"/>
<rect x="629" y="662" width="29" height="15" stroke-width="1.300"/>
<path d="M642 630h22v15h-22z" stroke-dasharray="3 1"/><path d="M664 655v18M678 655v18M680 655v18M694 655v18" stroke-width=".8"/>
<circle cx="506" cy="758" r="19" stroke-width="1.600"/>
<path d="M505 743c0 6-2 7-5 11a9 9 0 1 0 13 0c-4-3-7-5-8-11Z"/>
<rect x="1161" y="522" width="22" height="15" stroke-width="1"/>
<path d="M1218 416h-6v6M1258 416h7v6M1218 483h-6v-6M1258 483h7v-6" stroke="#e5161e"/>
<path d="M1149 345l-4 3v4M1171 345l4 3v4M1149 366l-4-3v-4M1171 366l4-3v-4"/>
<path d="M1156 400v15l4 2 5-2v-15M1178 397v12l3 3h7l3-3v-12"/>
<path d="M1158 453h19v11h-19z"/>
<rect x="1219" y="545" width="29" height="14" stroke-width="1.200"/>
<rect x="1158" y="522" width="28" height="14" stroke-width="1.200"/>
<path d="M1147 563h14M1147 563v14M1231 563h-7M1231 563v4M1147 652v-14M1147 652h14M1231 652v-8M1231 652h-10" stroke-width="1.600"/>
<path d="M992 639v38M992 639h6M1016 639v38M1016 677h-8M1022 637v40M1036 637v30M1020 661h16" stroke-width="1.300"/>
<path d="M1036 672v29h15v-29z" stroke-width="1.300"/>
<path d="M1058 672v16h26v-14h-7" stroke-width="1.300"/>
<rect x="907" y="738" width="15" height="28" stroke-width="1.300"/>
<path d="M1280 616v20M1310 616v20M1294 606h3M1294 642h3" stroke-width="1.300"/>
<path d="M1289 534h13v14h-13z" stroke-dasharray="4 2"/>
<path d="M1258 526h12v13h-12z" stroke-dasharray="3 2"/>
</g>
<g fill="none" stroke="#e5161e" stroke-width="2.600">
<path d="M987 389H1120V584H988V389"/>
<path d="M998 380H984V403" stroke-width="3"/><path d="M985 382H1004" stroke-width="2"/>
<path d="M823 428V414H838M945 411H968V433M823 545V561H842M950 561H965V545M950 415H964"/>
<path d="M812 596V578H830M812 710V726H835"/>
<path d="M827 610V595H845M947 595H966V612M966 692V709H947M828 692V709H845"/>
<path d="M980 707V726H958M960 574H981V597"/>
</g>
<path d="M948 413L959 413L965 421L965 430" fill="none" stroke="#e5161e" stroke-width="2"/>
<g fill="#e5161e"><path d="M448 517l5-3v6zM640 539l3-3v6zM563 670l-3 4h6zM763 710l-3-3h6zM680 722l-3 4h6l-3-4zM1087 763l-3 5h7zM986 734l-4 3 4 3zM954 752l-4 3 4 3zM972 750l-3 3 3 3zM965 760l-4 3 4 3zM1282 545a2 2 0 1 0 .1 0zM1167 343a2 2 0 1 0 .1 0z"/><circle cx="675" cy="332" r="3"/><path d="M495 669l-3 3h6zM1161 460l-4 4 4 3z"/></g>
<g stroke="#e5161e" stroke-width="1" fill="none"><path d="M1150 487v10h9M1153 498h7M1148 767v10h9M837 770v9h12M614 669v10h10"/></g>
</svg>

<!-- PCB labels -->
<div id="pcb" class="a" style="left:0;top:0;width:1521px;height:859px;overflow:hidden">
<b class="n" style="left:566px;top:454px;font:12.5px/13px 'Liberation Sans';color:#22dfe8;letter-spacing:-.1px;-webkit-text-stroke:0">H6126_V1.0&nbsp; A0</b>
<b class="n" style="left:618px;top:250px">ANT3404</b><b class="n v" style="left:602px;top:252px;color:#e04040">J516</b>
<b class="n v" style="left:711px;top:262px">ANT3408</b><b class="n v" style="left:749px;top:262px">ANT3402</b><b class="n v" style="left:788px;top:262px">ANT3401</b>
<b class="n" style="left:714px;top:276px;color:#e04040">61H</b><b class="n" style="left:752px;top:276px;color:#e04040">61H</b><b class="n" style="left:791px;top:276px;color:#e04040">61H</b>
<b class="n" style="left:1128px;top:259px">ANT5006</b><b class="n" style="left:1163px;top:264px">ANT5003</b><b class="n v" style="left:1115px;top:262px;color:#e04040">J519</b><b class="n v" style="left:1177px;top:262px;color:#e04040">J516</b>
<b class="n v" style="left:1013px;top:341px">REC-</b><b class="n v" style="left:1041px;top:341px">REC+</b><b class="n" style="left:1015px;top:355px;color:#e04040">P1H</b><b class="n" style="left:1043px;top:355px;color:#e04040">P1H</b>
<b class="n" style="left:808px;top:313px">H1013</b><b class="n" style="left:747px;top:489px">H1008</b><b class="n" style="left:963px;top:343px">H1007</b><b class="n" style="left:1168px;top:306px">H1014</b><b class="n" style="left:771px;top:553px">H1011</b><b class="n" style="left:809px;top:762px">H1010</b><b class="n" style="left:1021px;top:753px">H1012</b><b class="n" style="left:1257px;top:753px">H1009</b>
<b style="left:723px;top:293px">L3402</b><b style="left:739px;top:293px">R3410</b><b style="left:753px;top:293px">C3465</b><b style="left:769px;top:293px">R3407</b><b style="left:727px;top:302px">R3405</b><b class="v" style="left:737px;top:307px">R3411</b><b class="v" style="left:702px;top:311px">C3406</b><b class="v" style="left:708px;top:306px">C3461</b><b class="v" style="left:716px;top:306px">L3406</b><b style="left:734px;top:315px">C3501</b><b class="n" style="left:750px;top:308px">U3402</b><b style="left:765px;top:301px">R3408</b><b class="v" style="left:762px;top:310px">R3409</b><b style="left:743px;top:324px">C3425</b><b class="v" style="left:754px;top:330px">C3428</b><b style="left:764px;top:322px">C3427</b>
<b style="left:672px;top:348px">C3466</b><b class="v" style="left:676px;top:384px">C3467</b><b class="n v" style="left:675px;top:327px">U3401</b>
<b class="n" style="left:692px;top:379px">TP_SDA4</b><b class="n" style="left:689px;top:393px">TP_SCL4</b>
<b class="n" style="left:718px;top:349px">LED2203</b><b class="n" style="left:718px;top:368px">LED2207</b><b class="n" style="left:718px;top:388px">LED2204</b><b class="n" style="left:718px;top:407px">LED2219</b><b class="n v" style="left:742px;top:367px">LED2213</b><b class="n v" style="left:758px;top:367px">LED2205</b><b class="n v" style="left:773px;top:367px">LED2212</b><b class="n v" style="left:727px;top:461px">LED2314</b><b class="n v" style="left:757px;top:461px">LED2306</b>
<b class="n" style="left:794px;top:387px">SDA3</b><b class="n" style="left:791px;top:394px">SCL3</b><b class="n" style="left:787px;top:402px">EINT10</b><b class="n" style="left:775px;top:412px">NFC_RST</b><b class="n" style="left:793px;top:412px">SRCL4</b><b class="n v" style="left:751px;top:402px">RST1</b><b class="n" style="left:778px;top:419px">TP_SDA0</b><b class="n" style="left:796px;top:427px">TP_SCL0</b><b class="n" style="left:750px;top:424px">RX0</b><b class="n" style="left:765px;top:424px">TX0</b>
<b class="v" style="left:817px;top:360px">R6300</b><b class="v" style="left:824px;top:360px">R6312</b><b style="left:839px;top:361px">C6309</b><b class="v" style="left:814px;top:377px">R3388</b><b class="v" style="left:821px;top:377px">R6319</b><b class="v" style="left:828px;top:377px">C6315</b><b style="left:843px;top:380px">C6308</b><b style="left:841px;top:387px">C6314</b><b style="left:841px;top:393px">R6320</b><b class="v" style="left:823px;top:395px">R6327</b><b class="v" style="left:831px;top:397px">R6322</b><b class="v" style="left:815px;top:395px">R3311</b><b style="left:863px;top:391px">C1079</b><b style="left:878px;top:394px">C1088</b><b style="left:847px;top:405px">R1007</b><b style="left:862px;top:405px">R1285</b><b class="v" style="left:873px;top:364px">R6321</b><b class="v" style="left:883px;top:364px">R6320</b><b class="v" style="left:891px;top:370px">R6219</b><b class="v" style="left:899px;top:371px">R6216</b><b class="v" style="left:909px;top:372px">R6214</b><b class="v" style="left:919px;top:370px">R6215</b><b class="v" style="left:907px;top:384px">R6218</b><b class="v" style="left:917px;top:384px">R6217</b><b class="v" style="left:927px;top:380px">R6212</b><b class="v" style="left:937px;top:380px">R6213</b><b style="left:930px;top:394px">R1208</b><b style="left:932px;top:403px">C1085</b><b class="v" style="left:918px;top:404px">C1071</b>
<b style="left:1000px;top:378px">R4501</b><b style="left:1028px;top:379px">R4001</b><b style="left:1043px;top:379px">R4002</b><b style="left:1057px;top:379px">C4009</b><b class="v" style="left:1068px;top:373px">B6301</b><b class="v" style="left:1074px;top:373px">B6304</b><b style="left:1086px;top:365px">T6005</b><b style="left:1086px;top:373px">C6016</b><b class="v" style="left:1097px;top:368px">C6015</b><b style="left:1078px;top:383px">NTC6301</b><b style="left:1096px;top:380px">C6017</b>
<b class="n" style="left:1010px;top:396px">TP4002</b><b class="n" style="left:998px;top:401px">TP4001</b><b class="n" style="left:998px;top:409px">TP4005</b><b class="n" style="left:1102px;top:396px">TP4003</b><b class="n" style="left:1116px;top:401px">TP4004</b><b class="n" style="left:1116px;top:409px">TP4008</b><b class="n" style="left:1053px;top:486px">U4001</b>
<b class="n" style="left:998px;top:567px">TP4007</b><b class="n" style="left:1003px;top:572px">TP4009</b><b class="n" style="left:1009px;top:578px">TP4010</b><b class="n" style="left:1110px;top:567px">TP4006</b><b class="n" style="left:1101px;top:572px">TP4011</b><b class="n" style="left:1112px;top:578px">TP4012</b>
<b class="v" style="left:1130px;top:437px">R4003</b><b class="v" style="left:1131px;top:456px">C4032</b><b class="v y" style="left:1132px;top:469px">C4030</b><b class="v y" style="left:1132px;top:497px">C4006</b><b style="left:1132px;top:511px">C4007</b>
<b style="left:1119px;top:297px">C5021</b><b style="left:1119px;top:304px">L5017</b><b class="v" style="left:1131px;top:300px">L5004</b><b class="v" style="left:1117px;top:314px">R5022</b><b class="v" style="left:1124px;top:314px">L5003</b><b style="left:1119px;top:325px">R5020</b><b class="v" style="left:1131px;top:321px">L5001</b>
<b class="n" style="left:1158px;top:355px">U5002</b><b style="left:1171px;top:377px">C5042</b><b style="left:1172px;top:384px">L5032</b><b style="left:1176px;top:392px">C5041</b><b class="v" style="left:1155px;top:381px">L5031</b><b style="left:1157px;top:393px">C5016</b><b class="n v" style="left:1161px;top:407px">U5008</b><b class="n v" style="left:1184px;top:405px">U5004</b><b style="left:1183px;top:418px">L5033</b><b class="v" style="left:1194px;top:413px">C5040</b><b class="v" style="left:1202px;top:409px">L5039</b><b class="n" style="left:1224px;top:407px">C5027</b><b class="n" style="left:1240px;top:407px">C5003</b>
<b style="left:1166px;top:422px">C5008</b><b class="y" style="left:1186px;top:428px">C5006</b><b style="left:1167px;top:429px">C5015</b><b class="v" style="left:1164px;top:440px">L5013</b><b style="left:1175px;top:437px">L5010</b><b style="left:1189px;top:437px">C5009</b><b style="left:1182px;top:444px">L5008</b><b class="v" style="left:1192px;top:447px">L5015</b><b class="n" style="left:1169px;top:458px">C5005</b><b class="v" style="left:1183px;top:462px">C5028</b><b class="v" style="left:1191px;top:462px">C5011</b><b class="v" style="left:1164px;top:472px">C5022</b><b style="left:1176px;top:473px">C5029</b><b style="left:1191px;top:473px">L5009</b><b style="left:1168px;top:483px">C5014</b><b style="left:1168px;top:490px">L5007</b><b class="v" style="left:1181px;top:485px">C5033</b><b style="left:1192px;top:484px">C5030</b><b style="left:1197px;top:491px">C5001</b><b style="left:1211px;top:491px">C5013</b><b style="left:1228px;top:491px">C5018</b><b style="left:1243px;top:491px">C5017</b><b class="n" style="left:1237px;top:449px">U5003</b>
<b class="n" style="left:1156px;top:498px">SH1006</b><b class="n" style="left:1307px;top:421px">MARK1003</b>
<b class="n" style="left:1172px;top:529px">C2010</b><b class="v y" style="left:1193px;top:530px">C2011</b><b class="y" style="left:1210px;top:526px">C2032</b><b class="y" style="left:1210px;top:538px">C2039</b><b class="v" style="left:1225px;top:530px">C2029</b><b class="v" style="left:1232px;top:530px">C2033</b><b style="left:1227px;top:540px">C2028</b><b class="y" style="left:1208px;top:552px">C2040</b><b class="n" style="left:1233px;top:551px">C2014</b><b class="y" style="left:1174px;top:543px">C2009</b><b class="y" style="left:1174px;top:553px">R2002</b><b class="v y" style="left:1158px;top:547px">C2033</b><b class="n v" style="left:1139px;top:535px">PL2005</b><b class="v" style="left:1130px;top:558px">C4030</b><b class="v y" style="left:1132px;top:576px">C2007</b><b class="n" style="left:1129px;top:596px">C2005</b><b class="n" style="left:1128px;top:622px">C2004</b><b class="n" style="left:1128px;top:644px">C2003</b><b class="n" style="left:1128px;top:656px">C2006</b>
<b class="n" style="left:1096px;top:602px">PL2003</b><b class="n" style="left:1089px;top:628px">PL2002</b><b class="n" style="left:1098px;top:654px">PL2001</b><b class="n" style="left:1056px;top:657px">PL2303</b><b class="n" style="left:1027px;top:613px">PL2251</b><b class="n" style="left:1066px;top:611px">C2038</b><b class="v n" style="left:1067px;top:632px">C2235</b><b class="v" style="left:1054px;top:635px">C2302</b><b class="v" style="left:1055px;top:598px">C4016</b><b class="v" style="left:1062px;top:598px">C4012</b><b style="left:1072px;top:596px">C4023</b>
<b class="n" style="left:1003px;top:657px">U2251</b><b class="n v" style="left:1028px;top:657px">L2251</b><b class="n" style="left:1020px;top:685px">C2251</b><b class="y" style="left:1023px;top:697px">R2253</b><b class="n v" style="left:1043px;top:687px">C2227</b><b class="y" style="left:1062px;top:698px">C2228</b><b class="n v" style="left:1073px;top:680px">U2206</b><b class="v" style="left:1077px;top:697px">C2229</b><b class="y" style="left:1091px;top:697px">C2226</b><b style="left:1109px;top:699px">C2231</b><b style="left:1123px;top:702px">R6120</b><b class="n v" style="left:1129px;top:678px">PL2004</b><b style="left:1136px;top:698px">R6101</b><b style="left:1149px;top:700px">C6107</b><b class="y" style="left:1167px;top:662px">C2107</b><b class="v" style="left:1185px;top:666px">C2105</b><b class="y" style="left:1167px;top:674px">C2106</b><b style="left:1149px;top:669px">R2001</b><b style="left:1149px;top:662px">C2002</b><b class="v" style="left:1097px;top:680px">C2130</b><b class="v" style="left:1109px;top:680px">C2008</b>
<b style="left:1159px;top:683px">C2112</b><b style="left:1159px;top:691px">R2103</b><b style="left:1163px;top:697px">R2119</b><b class="n" style="left:1171px;top:691px">B6014</b><b class="n" style="left:1197px;top:691px">B6113</b><b style="left:1177px;top:700px">C6029</b><b style="left:1192px;top:697px">R8005</b><b style="left:1205px;top:701px">C6108</b><b style="left:1219px;top:699px">C6027</b><b style="left:1233px;top:701px">C6110</b>
<b style="left:1199px;top:682px">R8015</b><b style="left:1210px;top:664px">R8013</b><b style="left:1210px;top:672px">C2101</b><b class="v" style="left:1199px;top:662px">C2102</b><b class="n" style="left:1235px;top:689px">C6001</b><b style="left:1228px;top:677px">C6105</b><b class="v n" style="left:1212px;top:685px">B6013</b><b class="v" style="left:1221px;top:688px">B6028</b><b class="v" style="left:1221px;top:665px">C6023</b><b class="v" style="left:1229px;top:663px">C6024</b><b class="v" style="left:1236px;top:663px">C6016</b><b class="v" style="left:1243px;top:663px">C6014</b><b style="left:1252px;top:660px">C6025</b><b style="left:1252px;top:667px">C6015</b><b style="left:1253px;top:674px">C6026</b><b style="left:1253px;top:681px">R6001</b><b style="left:1270px;top:660px">C6019</b><b style="left:1270px;top:667px">C6018</b><b class="v" style="left:1281px;top:663px">T6012</b><b class="v" style="left:1289px;top:663px">C6002</b><b class="v" style="left:1297px;top:663px">C6008</b><b class="v" style="left:1304px;top:663px">R6001</b><b class="v" style="left:1270px;top:682px">R6016</b><b class="v" style="left:1277px;top:682px">C6021</b><b style="left:1288px;top:674px">R6001</b><b style="left:1288px;top:681px">R8002</b><b class="v" style="left:1270px;top:692px">C2013</b><b class="v" style="left:1277px;top:695px">C6013</b><b class="v" style="left:1284px;top:693px">C6020</b><b class="v" style="left:1291px;top:695px">C8002</b><b class="n" style="left:1258px;top:694px">H6100</b><b class="n v" style="left:1302px;top:683px">C6002</b>
<b class="n" style="left:1264px;top:532px">U2306</b><b class="v" style="left:1277px;top:530px">C2037</b><b class="v n" style="left:1296px;top:541px">U5002</b><b class="v" style="left:1251px;top:528px">C2313</b><b class="v" style="left:1252px;top:547px">C2030</b><b class="v" style="left:1261px;top:548px">C2032</b><b style="left:1272px;top:547px">C2031</b><b style="left:1287px;top:556px">B6541</b><b class="v" style="left:1261px;top:566px">C2034</b><b class="v" style="left:1268px;top:558px">C2037</b>
<b style="left:1241px;top:581px">C2016</b><b class="v" style="left:1241px;top:567px">C2036</b><b class="v" style="left:1252px;top:578px">C2116</b><b class="v" style="left:1262px;top:580px">C2115</b><b class="v" style="left:1270px;top:580px">C2126</b><b style="left:1249px;top:591px">C2108</b><b style="left:1249px;top:598px">R2122</b><b style="left:1249px;top:605px">R2120</b><b style="left:1266px;top:589px">C2018</b><b style="left:1266px;top:597px">C2017</b><b class="v" style="left:1277px;top:575px">T6021</b><b class="v" style="left:1277px;top:587px">T6008</b><b class="v" style="left:1285px;top:592px">C2109</b><b class="v n" style="left:1290px;top:574px">C6503</b><b class="v n" style="left:1302px;top:571px">B6001</b><b class="v n" style="left:1302px;top:590px">B6002</b>
<b class="n v" style="left:1292px;top:623px">C2101</b><b class="v" style="left:1240px;top:618px">R2101</b><b class="v" style="left:1247px;top:617px">C2104</b><b class="v" style="left:1254px;top:617px">R2111</b><b class="v" style="left:1261px;top:617px">C2115</b><b style="left:1242px;top:628px">C2001</b><b class="v n" style="left:1258px;top:633px">C2038</b><b style="left:1245px;top:639px">R2106</b><b style="left:1245px;top:646px">R2102</b>
<b class="n v" style="left:1187px;top:610px">U3001</b><b class="n v" style="left:895px;top:486px">U1001</b><b class="n v" style="left:898px;top:650px">U4002</b>
<b class="n" style="left:1139px;top:748px">J6103</b><b class="n" style="left:1231px;top:725px">DM</b><b class="n" style="left:1231px;top:743px">DP</b><b class="n" style="left:1231px;top:761px">VBUS</b>
<b class="n" style="left:862px;top:742px">PL2221</b><b style="left:856px;top:762px">C2210</b><b class="n" style="left:839px;top:774px">SH1001</b><b class="n v" style="left:892px;top:745px">U2221</b><b class="n v" style="left:915px;top:752px">C2209</b><b style="left:915px;top:733px">R2221</b><b class="v" style="left:927px;top:735px">R2222</b><b class="v" style="left:934px;top:737px">R6117</b><b class="v" style="left:941px;top:737px">R6118</b><b class="v n" style="left:953px;top:736px">R6103</b><b class="v" style="left:962px;top:737px">R6105</b><b class="v n" style="left:976px;top:736px">R6104</b><b style="left:958px;top:748px">R6106</b><b style="left:973px;top:748px">C6110</b><b class="v" style="left:927px;top:752px">R6116</b><b class="v" style="left:934px;top:752px">R6115</b><b class="v n" style="left:943px;top:750px">R6108</b><b class="n" style="left:933px;top:763px">D2104</b><b class="v n" style="left:957px;top:759px">R6109</b><b class="n" style="left:971px;top:759px">R6107</b>
<b class="v" style="left:826px;top:568px">C6375</b><b class="v" style="left:834px;top:568px">C6374</b><b class="v" style="left:842px;top:568px">C6376</b><b class="v" style="left:849px;top:568px">C6378</b><b class="v" style="left:857px;top:568px">C6377</b><b class="v" style="left:863px;top:568px">R1035</b><b class="v" style="left:871px;top:568px">R1036</b><b class="v" style="left:878px;top:568px">R1034</b><b class="v" style="left:885px;top:568px">R1037</b><b style="left:895px;top:568px">C1086</b><b style="left:911px;top:572px">R1101</b><b style="left:925px;top:566px">C1073</b><b style="left:926px;top:573px">C1087</b><b class="v" style="left:937px;top:568px">C1083</b><b class="v" style="left:945px;top:568px">C1082</b><b class="v y" style="left:956px;top:568px">C1084</b>
<b class="v" style="left:815px;top:422px">R1002</b><b class="v" style="left:818px;top:452px">C1079</b><b class="v" style="left:808px;top:441px">R1302</b><b class="v" style="left:801px;top:477px">C1096</b><b class="v" style="left:808px;top:477px">C1090</b><b class="v" style="left:817px;top:472px">C1104</b><b style="left:811px;top:496px">C1105</b><b class="v" style="left:815px;top:503px">C1101</b><b class="v" style="left:808px;top:515px">C1102</b><b class="v" style="left:815px;top:520px">C1103</b><b class="v" style="left:808px;top:535px">C6538</b><b class="v" style="left:815px;top:540px">C1100</b><b class="v" style="left:815px;top:556px">C1239</b><b style="left:815px;top:572px">C1069</b>
<b class="v" style="left:807px;top:597px">R1201</b><b style="left:803px;top:607px">R1204</b><b style="left:803px;top:614px">C1201</b><b style="left:803px;top:622px">C4004</b><b style="left:803px;top:628px">C4005</b><b class="v" style="left:792px;top:628px">R6519</b><b class="y" style="left:799px;top:642px">C4006</b><b style="left:793px;top:652px">R2246</b><b class="v" style="left:805px;top:663px">R6518</b><b class="v" style="left:812px;top:663px">R6518</b><b style="left:793px;top:667px">T2101</b><b class="v" style="left:791px;top:678px">R2103</b><b class="v" style="left:798px;top:678px">R2104</b><b class="n v" style="left:807px;top:687px">TP_DNN</b><b class="n v" style="left:807px;top:707px">TP_ENP</b>
<b class="n" style="left:744px;top:625px">ATA_OTG</b><b class="n" style="left:764px;top:625px">META</b><b class="n" style="left:752px;top:605px">IDBIG</b><b class="n" style="left:768px;top:651px">TP_SDA5</b><b class="n" style="left:768px;top:665px">TP_SCL5</b>
<b class="n" style="left:714px;top:705px">MO</b><b class="n" style="left:730px;top:701px">RST</b><b class="n v" style="left:746px;top:701px">VDD</b><b class="n" style="left:759px;top:701px">INT1</b><b class="n" style="left:710px;top:723px">CK</b><b class="n" style="left:710px;top:737px">MI</b><b class="n" style="left:710px;top:752px">CS</b>
<b class="n" style="left:751px;top:729px">J6102</b><b class="n" style="left:689px;top:708px">BAT_ON</b><b class="n v" style="left:663px;top:710px">VBAT</b><b class="n" style="left:617px;top:763px">GND</b><b class="n" style="left:631px;top:772px">BGND</b><b class="n" style="left:666px;top:743px">J2101</b><b class="n" style="left:630px;top:699px">R2121</b>
<b class="n v" style="left:633px;top:624px">R2211</b><b style="left:646px;top:611px">C6237</b><b style="left:661px;top:611px">C6317</b><b class="n" style="left:651px;top:621px">C2240</b><b class="n v" style="left:654px;top:637px">U2202</b><b class="n v" style="left:681px;top:630px">PL2204</b><b class="v" style="left:699px;top:628px">C2238</b><b class="v" style="left:708px;top:625px">R8520</b><b style="left:701px;top:645px">T6101</b><b style="left:701px;top:653px">T2102</b><b class="n v" style="left:631px;top:650px">R2201</b><b class="n v" style="left:643px;top:655px">L2202</b><b class="n v" style="left:651px;top:655px">C2219</b><b class="n v" style="left:671px;top:665px">U2101</b><b class="n v" style="left:687px;top:665px">D2102</b><b style="left:703px;top:661px">C6101</b><b style="left:703px;top:668px">T6104</b><b style="left:703px;top:676px">R6107</b><b style="left:703px;top:683px">T6103</b><b style="left:687px;top:680px">C2143</b><b class="n" style="left:643px;top:669px">C2111</b><b class="n" style="left:620px;top:682px">SH1005</b>
<b class="n v" style="left:472px;top:553px">J6204</b><b class="n" style="left:571px;top:649px">J6206</b><b class="n v" style="left:499px;top:678px">J6207</b><b class="n v" style="left:662px;top:553px">J6203</b><b class="v" style="left:626px;top:534px">C6233</b><b class="v" style="left:627px;top:552px">C6327</b>
<b class="n" style="left:571px;top:544px">LED2309</b><b class="n" style="left:571px;top:563px">LED2201</b><b class="n v" style="left:572px;top:738px">LED2302</b>
<b style="left:527px;top:477px">C6231</b><b style="left:527px;top:484px">C6232</b><b class="v" style="left:542px;top:481px">C6233</b><b class="v" style="left:548px;top:481px">C6321</b><b class="v" style="left:556px;top:481px">C6234</b><b class="v" style="left:563px;top:481px">R6235</b><b class="n" style="left:576px;top:477px">VSYNC</b>
<b class="n" style="left:670px;top:463px">ANT6601</b><b class="n" style="left:670px;top:488px">ANT6602</b>
<b class="n" style="left:549px;top:612px">PDN3</b><b class="n v" style="left:472px;top:627px">PWRKEY</b><b class="n" style="left:472px;top:647px">COLD</b><b class="n" style="left:464px;top:659px">RST3</b><b class="n" style="left:539px;top:691px">TP_SDA6</b><b class="n" style="left:533px;top:699px">TP_SCL6</b><b class="n" style="left:526px;top:708px">PDN4</b>
<b class="v" style="left:508px;top:624px">T6510</b><b class="v" style="left:515px;top:624px">T6509</b><b class="v" style="left:523px;top:624px">T6511</b>
<b class="n" style="left:506px;top:758px;color:#111">MPL1003</b><b class="n" style="left:467px;top:769px">MARK1001</b>
<b class="n v" style="left:1054px;top:691px">C2327</b>
<b style="left:986px;top:595px">R4026</b><b style="left:986px;top:602px">R4025</b><b style="left:986px;top:609px">C4001</b><b class="v y" style="left:988px;top:622px">C4003</b><b class="v n" style="left:999px;top:622px">C2215</b><b class="v" style="left:985px;top:640px">C4008</b><b class="v" style="left:982px;top:656px">R2251</b><b class="v" style="left:986px;top:670px">R2202</b><b style="left:988px;top:681px">R2202</b><b style="left:988px;top:688px">R6101</b><b class="v" style="left:988px;top:698px">R6124</b><b class="v" style="left:995px;top:698px">R6121</b><b class="v" style="left:1003px;top:698px">R6117</b><b class="v" style="left:1010px;top:696px">C2232</b><b style="left:991px;top:709px">R8103</b><b class="v" style="left:987px;top:720px">R8125</b>
</div>
</body></html>
